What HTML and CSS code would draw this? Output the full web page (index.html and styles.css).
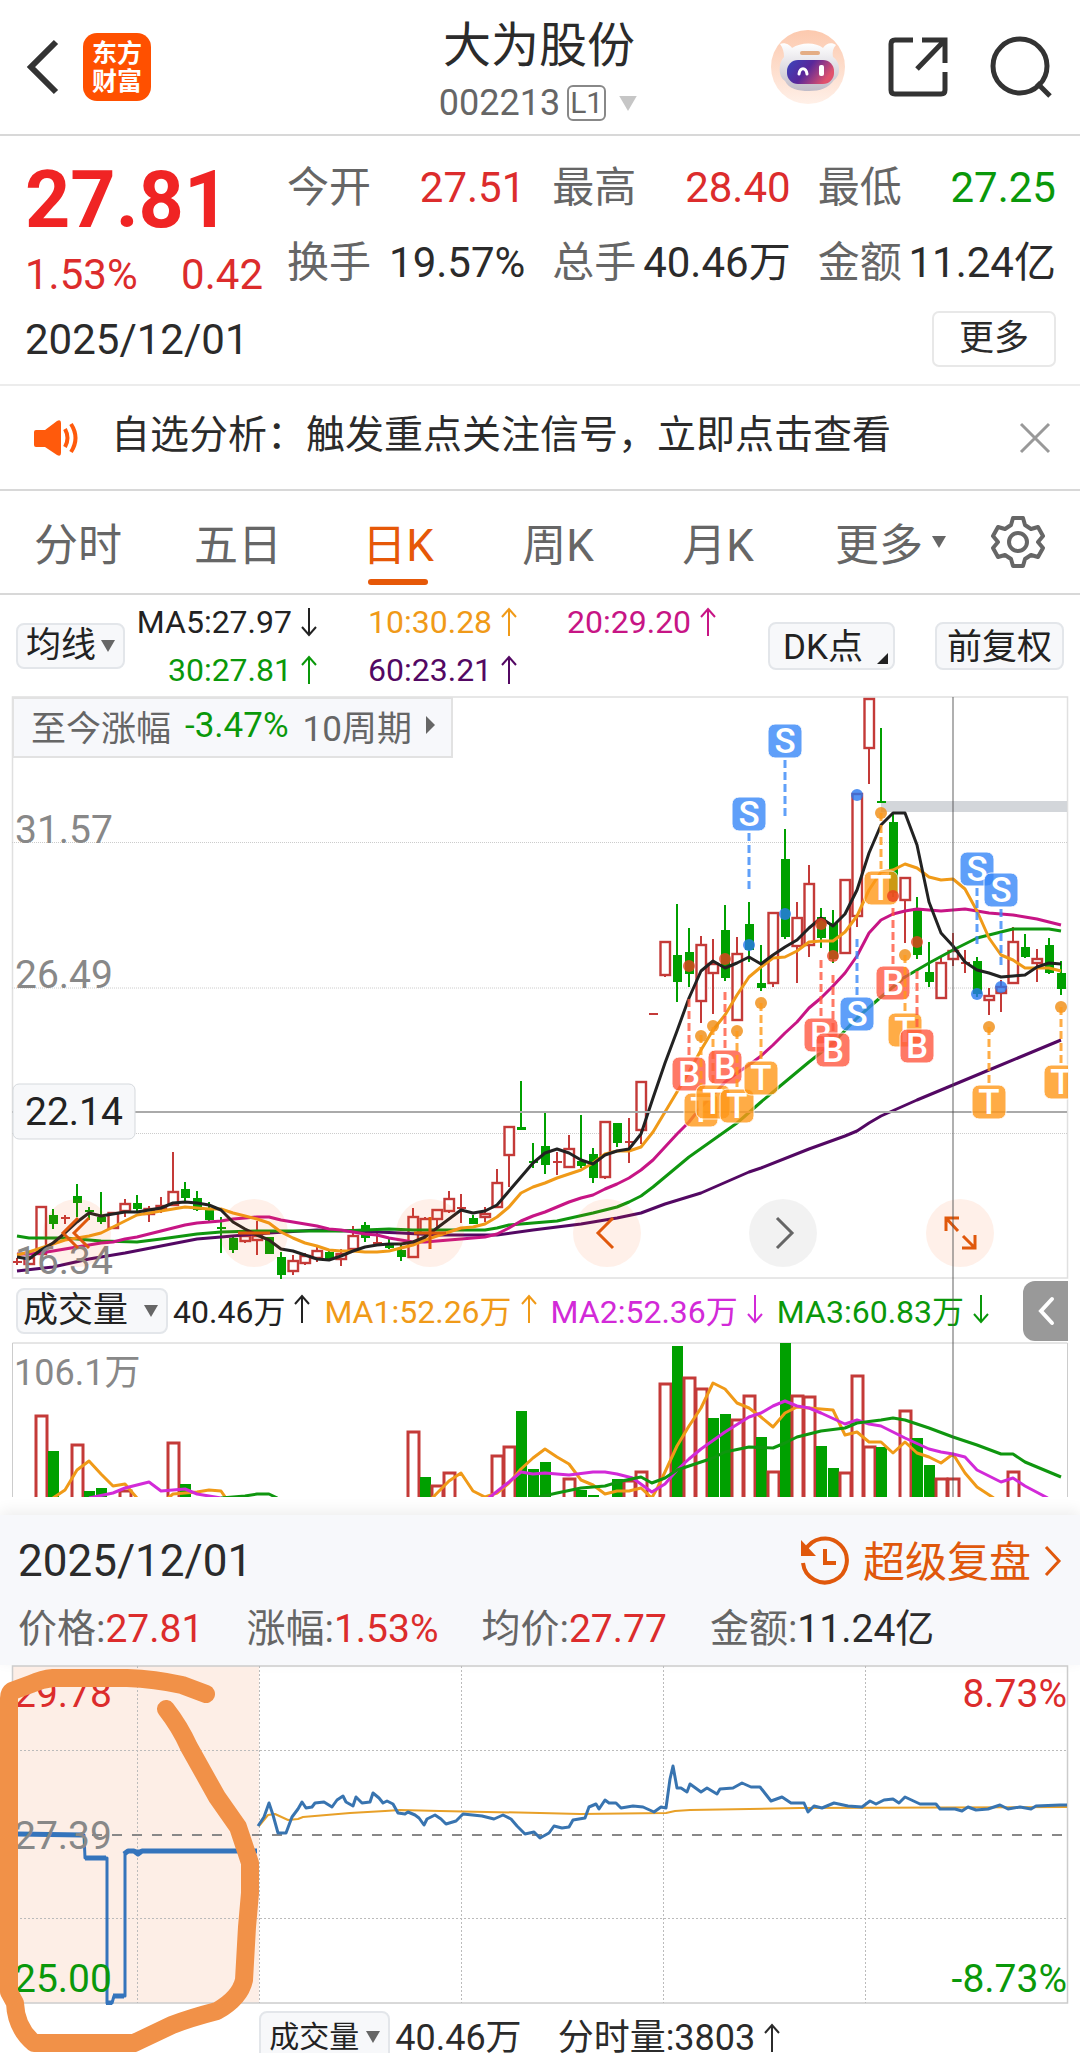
FILE: index.html
```html
<!DOCTYPE html>
<html lang="zh-CN">
<head>
<meta charset="utf-8">
<meta name="viewport" content="width=device-width, initial-scale=1">
<title>大为股份 002213</title>
<link rel="stylesheet" href="styles.css">
</head>
<body>
<svg class="defs" width="0" height="0" aria-hidden="true">
  <symbol id="up" viewBox="0 0 16 30"><path d="M8 29V2M1 10L8 2l7 8" fill="none" stroke="currentColor" stroke-width="2"/></symbol>
  <symbol id="down" viewBox="0 0 16 30"><path d="M8 1v27M1 20l7 8 7-8" fill="none" stroke="currentColor" stroke-width="2"/></symbol>
  <symbol id="caret" viewBox="0 0 14 12"><path d="M0 0h14L7 12z" fill="currentColor"/></symbol>
</svg>

<header class="topbar">
  <div class="side">
    <button class="icon" aria-label="返回"><svg width="34" height="56" viewBox="0 0 34 56"><path d="M30 3L5 28l25 25" fill="none" stroke="#333" stroke-width="6"/></svg></button>
    <a class="logo" href="#">东方<br>财富</a>
  </div>
  <div class="heading">
    <h1>大为股份</h1>
    <p class="code">002213<span class="level">L1</span><svg class="switch" width="22" height="15"><use href="#caret"/></svg></p>
  </div>
  <div class="side end">
    <button class="icon" aria-label="智能助手">
      <svg width="76" height="76" viewBox="0 0 76 76">
        <defs>
          <linearGradient id="halo" x2="0" y2="1"><stop stop-color="#fcc9ae"/><stop offset="1" stop-color="#fff0e8"/></linearGradient>
          <linearGradient id="visor" x2="1" y2=".4"><stop stop-color="#3947bd"/><stop offset=".5" stop-color="#58279a"/><stop offset="1" stop-color="#e0526d"/></linearGradient>
          <linearGradient id="shell" x2="0" y2="1"><stop stop-color="#fff"/><stop offset="1" stop-color="#c0bcc8"/></linearGradient>
        </defs>
        <circle cx="38" cy="38" r="37" fill="url(#halo)"/>
        <path d="M10 15c5-2 10 1 12 4 9-6 24-6 31 0 3-5 9-6 13-3-3 3-4 7-3 12 8 5 8 19 1 23-5 8-14 11-25 11S19 60 15 52c-7-4-7-18-1-24 0-5-1-9-4-13z" fill="url(#shell)"/>
        <rect x="17" y="31" width="47" height="24" rx="11" fill="url(#visor)"/>
        <path d="M29 45c1-7 7-7 8 0" fill="none" stroke="#fff" stroke-width="3" stroke-linecap="round"/>
        <rect x="49" y="36" width="5" height="11" rx="2" fill="#fff"/>
        <rect x="30" y="22" width="20" height="4" rx="2" fill="#e4ad84"/>
      </svg>
    </button>
    <button class="icon" aria-label="分享"><svg width="60" height="60" viewBox="0 0 60 60"><path d="M25 3H7q-4 0-4 4v46q0 4 4 4h46q4 0 4-4V35M34 3h23v23M57 3L29 32" fill="none" stroke="#333" stroke-width="5"/></svg></button>
    <button class="icon" aria-label="搜索"><svg width="62" height="62" viewBox="0 0 62 62"><circle cx="30" cy="30" r="27" fill="none" stroke="#333" stroke-width="5"/><path d="M47 47l13 13" stroke="#333" stroke-width="5"/></svg></button>
  </div>
</header>

<section class="quote">
  <div class="last">
    <strong class="price">27.81</strong>
    <p class="change"><span>1.53%</span><span>0.42</span></p>
  </div>
  <dl class="fields">
    <div><dt>今开</dt><dd class="red">27.51</dd></div>
    <div><dt>最高</dt><dd class="red">28.40</dd></div>
    <div><dt>最低</dt><dd class="green">27.25</dd></div>
    <div><dt>换手</dt><dd>19.57%</dd></div>
    <div><dt>总手</dt><dd>40.46万</dd></div>
    <div><dt>金额</dt><dd>11.24亿</dd></div>
  </dl>
  <div class="dateline">
    <time>2025/12/01</time>
    <button class="more">更多</button>
  </div>
</section>

<section class="notice">
  <svg width="46" height="38" viewBox="0 0 46 38"><path d="M3 11h9L24 2q4-2 4 2v30q0 4-4 2L12 28H3q-2 0-2-2V13q0-2 2-2z" fill="#ff5a0c"/><path d="M32 10q5 9 0 18M38 5q9 14 0 28" fill="none" stroke="#ff5a0c" stroke-width="4"/></svg>
  <a href="#">自选分析：触发重点关注信号，立即点击查看</a>
  <button class="icon" aria-label="关闭"><svg width="32" height="32" viewBox="0 0 32 32"><path d="M2 2l28 28M30 2L2 30" stroke="#999" stroke-width="3"/></svg></button>
</section>

<nav class="tabs">
  <button>分时</button>
  <button>五日</button>
  <button class="active">日K</button>
  <button>周K</button>
  <button>月K</button>
  <button class="last-tab">更多<svg width="14" height="12"><use href="#caret"/></svg></button>
  <button class="gear" aria-label="设置"><svg width="54" height="54" viewBox="0 0 54 54"><path d="M22 3h10l2 7 6 4 7-2 5 9-5 6 5 6-5 9-7-2-6 4-2 7H22l-2-7-6-4-7 2-5-9 5-6-5-6 5-9 7 2 6-4z" fill="none" stroke="#666" stroke-width="4" stroke-linejoin="round"/><circle cx="27" cy="27" r="9" fill="none" stroke="#666" stroke-width="4"/></svg></button>
</nav>

<section class="averages">
  <span class="picker">
    <select aria-label="主图指标"><option>均线</option></select>
    <svg width="14" height="12"><use href="#caret"/></svg>
  </span>
  <div class="ma">
    <span class="right">MA5:27.97<svg><use href="#down"/></svg></span>
    <span class="amber">10:30.28<svg><use href="#up"/></svg></span>
    <span class="magenta">20:29.20<svg><use href="#up"/></svg></span>
    <span class="right green">30:27.81<svg><use href="#up"/></svg></span>
    <span class="violet">60:23.21<svg><use href="#up"/></svg></span>
  </div>
  <button class="chip dk">DK点<svg width="11" height="11"><path d="M11 0v11H0z" fill="#222"/></svg></button>
  <button class="chip">前复权</button>
</section>

<section class="charts">
  <div class="kline">
    <svg id="kline" viewBox="0 696 1080 583" role="img" aria-label="日K线图"></svg>
    <button class="since">至今涨幅 <b>-3.47%</b> 10周期<svg width="9" height="18"><path d="M0 0l9 9-9 9z" fill="#666"/></svg></button>
    <div class="controls">
      <button aria-label="快退"><svg viewBox="0 0 68 68"><path d="M35 19L20 34l15 15M46 19L31 34l15 15"/></svg></button>
      <button aria-label="缩小"><svg viewBox="0 0 68 68"><path d="M18 34h32"/></svg></button>
      <button aria-label="放大"><svg viewBox="0 0 68 68"><path d="M18 34h32M34 18v32"/></svg></button>
      <button aria-label="后退"><svg viewBox="0 0 68 68"><path d="M40 19L25 34l15 15"/></svg></button>
      <button class="off" aria-label="前进"><svg viewBox="0 0 68 68"><path d="M28 19l15 15-15 15"/></svg></button>
      <button aria-label="全屏"><svg viewBox="0 0 68 68"><path d="M33 19H20v13M20 19l12 13M36 49h13V36M49 49L37 37"/></svg></button>
    </div>
  </div>
  <div class="volbar">
    <span class="picker wide">
      <select aria-label="副图指标"><option>成交量</option></select>
      <svg width="14" height="12"><use href="#caret"/></svg>
    </span>
    <span>40.46万<svg><use href="#up"/></svg></span>
    <span class="amber">MA1:52.26万<svg><use href="#up"/></svg></span>
    <span class="pink">MA2:52.36万<svg><use href="#down"/></svg></span>
    <span class="green">MA3:60.83万<svg><use href="#down"/></svg></span>
    <button class="drawer" aria-label="展开"><svg width="18" height="30" viewBox="0 0 18 30"><path d="M15 3L4 15l11 12" fill="none" stroke="#fff" stroke-width="4" stroke-linecap="round"/></svg></button>
  </div>
  <svg id="volume" viewBox="0 1342 1080 155" role="img" aria-label="成交量图"></svg>
  <i class="crosshair"></i>
</section>

<section class="panel">
  <div class="panel-head">
    <time>2025/12/01</time>
    <a href="#" class="replay">
      <svg width="50" height="50" viewBox="0 0 50 50"><path d="M5 15A22 22 0 1 1 3 27" fill="none" stroke="currentColor" stroke-width="4"/><path d="M1 4v16h15z" fill="currentColor"/><path d="M25 13v14h11" fill="none" stroke="currentColor" stroke-width="4"/></svg>
      <span>超级复盘</span>
      <svg width="18" height="30" viewBox="0 0 18 30"><path d="M2 1l13 14L2 29" fill="none" stroke="currentColor" stroke-width="3"/></svg>
    </a>
  </div>
  <p class="stats">
    <span>价格:<b class="red">27.81</b></span>
    <span>涨幅:<b class="red">1.53%</b></span>
    <span>均价:<b class="red">27.77</b></span>
    <span>金额:<b>11.24亿</b></span>
  </p>
</section>

<section class="intraday">
  <svg id="intraday" viewBox="0 1665 1080 340" role="img" aria-label="分时图"></svg>
  <div class="footbar">
    <span class="picker small">
      <select aria-label="分时副图指标"><option>成交量</option></select>
      <svg width="14" height="12"><use href="#caret"/></svg>
    </span>
    <span>40.46万</span>
    <span class="tick">分时量:3803<svg><use href="#up"/></svg></span>
  </div>
  <svg class="markup" viewBox="0 1665 1080 388" aria-hidden="true">
    <path d="M206 1694L182 1685Q155 1679 127 1678H53Q42 1679 31 1684L12 1691Q9 1693 9 1698V1992L15 2003Q16 2028 34 2043H134L172 2025Q190 2018 217 2011 240 1998 244 1980L247 1927 250 1893V1863L238 1827 217 1797 189 1747Q180 1727 166 1709" fill="none" stroke="#f19148" stroke-width="18" stroke-linecap="round" stroke-linejoin="round"/>
  </svg>
</section>
<script src="charts.js"></script>
</body>
</html>
```

FILE: styles.css
```css
* { box-sizing: border-box; }
body {
  margin: 0;
  background: #fff;
  color: #2b2b2b;
  font-family: Roboto, "Noto Sans CJK SC", sans-serif;
  overflow-x: hidden;
}
h1, p, dl, dd { margin: 0; font-weight: 400; }
button, select { font: inherit; color: inherit; border: 0; background: none; padding: 0; margin: 0; }
a { color: inherit; text-decoration: none; }
b { font-weight: 400; }
svg { display: block; flex: none; }
.defs { position: absolute; }
.red { color: #dc2c2c; }
.green { color: #0a980a; }
.amber { color: #f09a18; }
.magenta { color: #c71585; }
.violet { color: #530863; }
.pink { color: #d22ad8; }

.topbar {
  display: grid;
  grid-template-columns: 1fr auto 1fr;
  height: 136px;
  padding: 0 28px 0 26px;
  border-bottom: 2px solid #d8d8d8;
}
.side { display: flex; align-items: center; gap: 23px; }
.end { justify-content: flex-end; gap: 42px; }
.logo {
  width: 68px;
  height: 68px;
  padding-top: 7px;
  border-radius: 14px;
  background: #ff5000;
  color: #fff;
  font-size: 25px;
  font-weight: 700;
  line-height: 28px;
  text-align: center;
}
.heading { display: flex; flex-direction: column; align-items: center; padding-top: 12px; }
.heading h1 { font-size: 48px; line-height: 68px; }
.code { display: flex; align-items: center; gap: 7px; color: #666; font-size: 36px; line-height: 46px; }
.level { width: 39px; border: 2px solid #888; border-radius: 6px; font-size: 30px; line-height: 32px; text-align: center; }
.switch { color: #c6c6c6; margin-left: 4px; }

.quote {
  display: grid;
  grid-template-columns: 238px 1fr;
  grid-template-rows: 148px 74px;
  column-gap: 24px;
  height: 250px;
  padding: 18px 24px 0 25px;
  border-bottom: 2px solid #ececec;
}
.price { display: block; color: #f02424; font-size: 79px; font-weight: 700; line-height: 92px; }
.change { display: flex; justify-content: space-between; color: #dc2c2c; font-size: 42px; line-height: 58px; }
.fields { display: grid; grid-template-columns: 1fr 1fr 1fr; column-gap: 27px; grid-auto-rows: 75px; font-size: 42px; line-height: 67px; }
.fields div { display: flex; justify-content: space-between; white-space: nowrap; }
.fields dt { color: #666; }
.dateline { grid-column: 1 / 3; display: flex; align-items: center; justify-content: space-between; font-size: 42px; }
.more { width: 124px; height: 56px; border: 2px solid #e8e8e8; border-radius: 7px; font-size: 35px; line-height: 50px; }

.notice { display: flex; align-items: center; gap: 32px; height: 105px; padding: 0 29px 0 33px; border-bottom: 2px solid #d8d8d8; font-size: 39px; }
.notice a { line-height: 52px; padding-bottom: 5px; }
.notice button { margin-left: auto; }

.tabs { display: grid; grid-template-columns: repeat(6, 4fr) 3fr; height: 104px; border-bottom: 2px solid #d8d8d8; color: #666; font-size: 44px; }
.tabs button { display: flex; align-items: center; justify-content: center; gap: 9px; position: relative; padding-right: 4px; white-space: nowrap; }
.tabs .active { color: #e65808; }
.tabs .active::after { content: ""; position: absolute; bottom: 8px; width: 60px; height: 6px; border-radius: 3px; background: #e65808; }
.tabs .last-tab { justify-content: flex-end; padding-right: 14px; }
.tabs .gear { justify-content: flex-start; padding-left: 31px; }

.picker, .chip { display: flex; align-items: center; height: 46px; border: 2px solid #e3e6ea; border-radius: 8px; background: #f7f8fa; font-size: 35px; }
.picker { position: relative; width: 109px; color: #222; }
.picker select { appearance: none; width: 100%; padding-left: 8px; line-height: 42px; }
.picker svg { position: absolute; right: 8px; color: #666; pointer-events: none; }
.chip { height: 48px; padding: 0 10px 4px; white-space: nowrap; }
.averages { display: flex; align-items: center; height: 101px; padding: 0 16px; color: #222; }
.ma { display: grid; grid-template-columns: 192px 148px 1fr; column-gap: 51px; flex: 1; font-size: 32px; line-height: 48px; }
.ma span, .volbar > span, .tick { display: flex; align-items: center; gap: 9px; white-space: nowrap; }
.ma svg { width: 16px; height: 30px; }
.right { justify-content: flex-end; }
.dk { margin-right: 40px; gap: 14px; padding: 0 5px 4px 13px; }
.dk svg { align-self: flex-end; }

.charts { position: relative; }
.kline { position: relative; }
#kline, #volume, #intraday { width: 100%; height: auto; }
.since { position: absolute; left: 12px; top: 1px; display: flex; align-items: center; gap: 14px; height: 61px; padding: 0 16px 5px 17px; border: 2px solid #e2e2e2; background: #f7f8fb; color: #666; font-size: 35px; }
.since b { color: #0a980a; }
.controls { position: absolute; left: 4%; right: 8%; bottom: 2%; display: flex; justify-content: space-between; }
.controls button { width: 68px; height: 68px; border-radius: 50%; background: rgba(250, 90, 10, .09); }
.controls .off { background: rgba(0, 0, 0, .05); }
.controls path { fill: none; stroke: #e0580c; stroke-width: 3; }
.controls .off path { stroke: #666; }
.volbar { display: flex; align-items: center; height: 63px; padding: 0 12px 0 16px; color: #222; font-size: 32px; }
.volbar > span { margin-right: 14px; padding-bottom: 3px; }
.volbar > span:not(.picker) > svg, .tick svg { width: 16px; height: 34px; }
.volbar > .picker { margin-right: 5px; padding-bottom: 0; }
.wide { width: 152px; }
.wide select { padding-left: 5px; }
.drawer { display: flex; align-items: center; justify-content: center; width: 45px; height: 60px; margin-left: auto; border-radius: 12px 0 0 12px; background: #999; }
.crosshair { position: absolute; left: 88.15%; top: 1px; bottom: 0; width: 2px; background: rgba(80, 80, 80, .45); pointer-events: none; }

.panel { margin-top: 18px; height: 150px; padding: 16px 18px 0; background: #f7f8fb; box-shadow: 0 -4px 14px rgba(0, 0, 0, .07); }
.panel-head { display: flex; align-items: center; justify-content: space-between; height: 60px; font-size: 44px; }
.replay { display: flex; align-items: center; gap: 13px; color: #e0580c; font-size: 42px; }
.replay span { padding-bottom: 6px; }
.stats { display: flex; gap: 43px; color: #666; font-size: 39px; line-height: 76px; white-space: nowrap; }
.stats b:not(.red) { color: #2b2b2b; }

.intraday { position: relative; overflow: hidden; }
.footbar { display: flex; align-items: flex-start; height: 48px; padding: 6px 0 0 24%; font-size: 36px; line-height: 54px; overflow: hidden; }
.footbar .small { width: 131px; height: 52px; margin-right: 5px; font-size: 30px; }
.tick { margin-left: 36px; }
.markup { position: absolute; left: 0; top: 0; width: 100%; }

.axis { font-size: 39px; fill: #888; }
.axis.sm { font-size: 36px; }
.axis.cursor { fill: #222; }
.axis.hi { fill: #dc2c2c; }
.axis.lo { fill: #0a980a; }
.badge { font-size: 35px; font-weight: 500; fill: #fff; text-anchor: middle; }
```

FILE: charts.js
```js
const RED = '#c43a38', GREEN = '#00a000';
const X = i => 17 + 12 * i;
const $ = id => document.getElementById(id);

const line = (pts, color, w = 3) =>
  `<polyline points="${pts.map(p => p.join()).join(' ')}" fill="none" stroke="${color}" stroke-width="${w}" stroke-linejoin="round"/>`;
const seg = (x1, y1, x2, y2, color, extra = '') =>
  `<path d="M${x1} ${y1}L${x2} ${y2}" stroke="${color}" fill="none" ${extra}/>`;
const frame = (y, h, color) =>
  `<rect x="12.5" y="${y}" width="1055" height="${h}" fill="none" stroke="${color}" stroke-width="1.5"/>`;
const text = (x, y, s, cls) => `<text x="${x}" y="${y}" class="axis ${cls || ''}">${s}</text>`;
const byIndex = ys => ys.map((y, i) => [X(i), y]);
const sparse = s => s.split(' ').map(p => { const [i, y] = p.split(':'); return [X(+i), +y]; });

// index, colour, body top, body bottom, high, low
const candles = `0 r 1261 1263 1258 1265|1 r 1257 1264 1256 1265|2 r 1206 1254 1206 1254|3 g 1215 1224 1209 1229|4 r 1217 1218 1215 1224
5 g 1196 1203 1184 1217|6 g 1210 1212 1207 1220|7 g 1217 1222 1192 1224|8 r 1212 1228 1212 1228|9 r 1203 1211 1199 1217
10 g 1203 1209 1195 1213|11 r 1208 1214 1206 1222|12 r 1205 1209 1197 1213|13 r 1191 1205 1152 1205|14 g 1189 1198 1182 1203
15 g 1198 1210 1191 1211|16 g 1210 1220 1202 1222|17 g 1227 1228 1217 1253|18 g 1238 1250 1237 1253|19 r 1235 1241 1233 1243
20 r 1235 1240 1221 1255|21 g 1237 1254 1237 1254|22 g 1257 1275 1252 1279|23 r 1260 1271 1255 1275|24 r 1255 1263 1253 1265
25 r 1250 1258 1247 1262|26 g 1252 1259 1250 1261|27 r 1253 1259 1249 1266|28 r 1235 1249 1226 1251|29 g 1225 1238 1222 1242
30 r 1242 1243 1233 1244|31 g 1244 1248 1238 1249|32 g 1250 1257 1244 1261|33 r 1216 1257 1208 1257|34 r 1218 1233 1217 1240
35 r 1209 1219 1209 1227|36 r 1198 1211 1191 1213|37 r 1207 1209 1194 1223|38 g 1218 1224 1215 1224|39 r 1213 1217 1207 1222
40 r 1182 1207 1169 1207|41 r 1126 1155 1126 1187|42 g 1127 1130 1081 1130|43 g 1161 1162 1143 1168|44 g 1146 1165 1112 1174
45 r 1161 1163 1152 1175|46 r 1148 1167 1135 1168|47 g 1161 1166 1115 1168|48 g 1154 1178 1148 1183|49 r 1121 1177 1121 1179
50 g 1123 1143 1123 1147|51 r 1141 1143 1118 1163|52 r 1081 1130 1081 1144|53 r 1013 1015 1013 1015|54 r 941 975 941 977
55 g 955 982 904 1002|56 g 952 974 928 987|57 r 944 1001 936 1023|58 r 963 973 939 1014|59 g 930 978 905 981
60 r 953 1020 937 1020|61 g 924 950 902 962|62 g 983 988 945 991|63 r 912 983 912 987|64 g 859 937 829 939
65 r 917 946 902 983|66 r 883 945 865 957|67 g 917 938 908 948|68 g 923 959 910 963|69 r 879 953 879 953
70 r 793 916 793 927|71 r 698 748 698 784|72 g 801 803 728 803|73 g 822 893 813 897|74 r 877 900 877 943
75 g 908 955 897 959|76 g 972 982 942 987|77 r 962 998 957 998|78 r 950 959 933 966|79 r 962 964 950 973
80 g 961 994 957 997|81 r 995 1000 988 1015|82 r 986 993 980 1012|83 r 941 983 927 983|84 g 947 957 934 958
85 r 958 963 949 982|86 g 945 973 938 974|87 g 973 989 961 995`.split(/[|\n]/).map(s => s.split(' '));

const ma5 = [1257,1259,1250,1243,1233,1222,1213,1216,1214,1212,1212,1210,1208,1203,1202,1203,1205,1210,1222,1229,1235,1240,1249,1251,1255,1259,1260,1256,1251,1247,1245,1244,1244,1242,1237,1228,1219,1210,1213,1211,1205,1191,1177,1163,1153,1149,1153,1160,1164,1155,1151,1149,1134,1098,1063,1031,998,971,961,968,963,957,964,955,947,940,928,918,926,914,890,853,825,813,813,845,902,933,946,962,970,973,977,976,975,967,963,964];
const ma10 = [1255,1252,1248,1244,1240,1238,1236,1233,1227,1221,1215,1213,1211,1209,1207,1208,1209,1209,1213,1216,1219,1223,1232,1238,1243,1246,1250,1251,1251,1252,1252,1251,1248,1245,1240,1236,1232,1228,1227,1224,1217,1207,1193,1187,1183,1178,1174,1170,1163,1154,1151,1151,1147,1132,1112,1092,1072,1050,1030,1015,995,977,967,958,957,951,942,941,941,932,916,890,872,870,864,868,877,880,879,889,911,938,955,960,968,968,968,971];
const ma20 = [1254,1254,1253,1251,1249,1247,1245,1243,1242,1239,1237,1234,1231,1228,1225,1223,1222,1221,1219,1218,1217,1217,1220,1222,1224,1226,1229,1230,1232,1234,1235,1238,1240,1242,1242,1241,1240,1239,1238,1237,1234,1228,1221,1216,1212,1207,1202,1198,1195,1189,1184,1178,1170,1160,1147,1134,1122,1107,1095,1082,1073,1065,1056,1045,1033,1022,1008,998,986,973,956,933,920,914,911,909,910,911,910,909,911,913,914,915,917,919,922,925];
const ma30 = '0:1236 1:1238 4:1238 7:1241 10:1242 12:1239 15:1234 17:1232 20:1231 27:1231 31:1229 33:1230 39:1230 40:1228 41:1225 43:1223 45:1221 48:1213 50:1207 51:1202 52:1196 53:1187 54:1177 56:1157 58:1140 60:1123 62:1102 64:1082 66:1062 68:1043 70:1018 72:997 74:977 76:963 78:950 80:938 82:932 83:929 86:929 87:931';
const ma60 = '0:1271 3:1267 6:1259 9:1253 12:1246 15:1239 17:1237 21:1233 25:1230 28:1231 32:1233 35:1235 40:1235 43:1230 47:1224 50:1218 52:1213 54:1204 57:1193 61:1172 62:1168 66:1149 69:1136 70:1131 71:1123 72:1116 75:1100 78:1085 81:1070 84:1055 87:1040';

// letter, index, badge centre y, signal dot y
const marks = [
  ['B',56,1074,966],['T',57,1110,1036],['T',58,1102,1026],['B',59,1067,959],['T',60,1106,1031],
  ['S',61,814,945],['T',62,1078,1003],['S',64,741,914],['B',67,1035,924],['B',68,1050,956],
  ['S',70,1014,795],['T',72,888,813],['B',73,983,896],['T',74,1030,955],['B',75,1046,942],
  ['S',80,869,994],['T',81,1102,1027],['S',82,890,987],['T',87,1082,1007]];
const tint = { S: '#3888f8', B: '#ff5840', T: '#ff9818' };
const dot = { S: '#2878f0', B: '#e84020', T: '#f08c10' };

function drawKline() {
  let s = frame(697, 581, '#e0e0e0');
  for (const y of [842.5, 988, 1133.5]) s += seg(12, y, 1067, y, '#ccc', 'stroke-dasharray="1 1"');
  s += '<rect x="881" y="801" width="186" height="11" fill="#d3d6da"/>';
  for (const [i, c, t, b, h, l] of candles) {
    const x = X(+i), col = c === 'r' ? RED : GREEN, H = b - t;
    s += seg(x, h, x, t, col, 'stroke-width="2"') + seg(x, b, x, l, col, 'stroke-width="2"');
    s += c === 'r' && H > 2
      ? `<rect x="${x - 4.5}" y="${+t + 1}" width="9.5" height="${H - 1}" fill="#fff" stroke="${RED}" stroke-width="2.4"/>`
      : `<rect x="${x - 4}" y="${t}" width="9" height="${Math.max(H, 2)}" fill="${col}"/>`;
  }
  s += line(sparse(ma60), '#530863') + line(sparse(ma30), '#0f960f') + line(byIndex(ma20), '#c71585')
    + line(byIndex(ma10), '#f09a18') + line(byIndex(ma5), '#222');
  s += seg(12, 1112, 1067, 1112, '#aaa', 'stroke-width="2"');
  s += '<clipPath id="plot"><rect x="12" y="697" width="1056" height="581"/></clipPath><g clip-path="url(#plot)">';
  for (const [k, i, y, d] of marks) {
    const x = X(i), above = y < d;
    const from = above ? y + 19 : y - 75;
    s += `<circle cx="${x}" cy="${d}" r="6" fill="${dot[k]}" opacity=".8"/>`;
    s += seg(x, from, x, from + 56, tint[k], 'stroke-width="3" stroke-dasharray="8 4" opacity=".8"');
    s += `<rect x="${x - 17}" y="${y - 17}" width="34" height="34" rx="7" fill="${tint[k]}" stroke="#fff" opacity=".8"/>`;
    s += `<text class="badge" x="${x}" y="${y + 12}">${k}</text>`;
  }
  s += '</g>' + text(15, 843, '31.57') + text(15, 988, '26.49') + text(15, 1274, '16.34');
  s += '<rect x="13" y="1084" width="122" height="55" rx="6" fill="#f7f8fa" stroke="#d5d9dd"/>' + text(25, 1125, '22.14', 'cursor');
  $('kline').innerHTML = s;
}

const bars = '2r1415 3g1451 5r1444 6g1491 7g1488 9r1490 13r1442 14g1484 33r1431 34g1477 35r1485 36r1472 40r1455 41r1446 42g1411 43g1469 44g1462 46r1478 47g1490 48g1495 50g1479 51r1480 52r1471 54r1383 55g1346 56r1377 57r1388 58g1418 59g1414 60r1419 61r1395 62g1437 63r1471 64g1343 65r1395 66r1396 67g1446 68g1468 69r1472 70r1375 71r1446 72g1447 74r1410 75g1438 76g1465 77r1478 78r1478 83r1471';
const vol = [
  ['#f09a18', '3:1498 4:1490 5:1470 6:1461 7:1474 8:1486 9:1484 10:1498'],
  ['#f09a18', '12.6:1498 13:1494 15:1492 16:1490 17:1491 17.4:1498'],
  ['#f09a18', '34.6:1498 36:1481 37:1473 38:1491 39:1497 40:1493 41:1483 42:1469 43:1458 44:1449 45:1457 46:1464 47:1480 48:1485 49:1494 50:1491 51:1491 52:1488 52.9:1498 53.4:1487 54:1472 55:1446 56:1426 57:1408 58:1383 59:1389 60:1403 61:1408 62:1417 63:1427 64:1413 65:1407 66:1408 68:1410 69:1435 70:1432 71:1442 72:1442 73:1453 74:1442 75:1453 76:1457 77:1463 78:1454 79:1473 80:1487 81.4:1498'],
  ['#d22ad8', '6:1498 8:1493 9:1488 11:1482 12:1491 14:1489 15:1494 17:1498'],
  ['#d22ad8', '39.3:1498 41:1482 42:1472 43:1474 44:1473 46:1475 48:1472 49:1472 50:1474 51.3:1478 52.9:1492 54:1484 55:1470 56:1459 57:1449 59:1432 61:1417 62:1413 63:1406 64:1401 65:1406 66:1408 67:1413 69:1424 70:1420 71:1424 72:1426 74:1438 76:1449 77:1452 78:1454 79:1457 80:1470 82:1482 83:1478 84:1486 85.9:1498'],
  ['#0f960f', '17:1498 19:1496 20:1494 21:1494 21.7:1498'],
  ['#0f960f', '43.5:1497 45:1493 47:1488 49:1486 50.4:1481 52:1477 52.9:1483 54:1478 55:1470 58:1458 59:1452 61:1447 63:1448 64:1443 65:1437 67:1431 69:1428 70:1423 72:1420 73:1418 74:1420 76:1428 78:1437 80:1445 82:1454 83:1454 84:1462 87:1477']];

function drawVolume() {
  let s = '<path d="M12.5 1497V1343H1067.5V1497" fill="none" stroke="#ccc"/>';
  for (const b of bars.split(' ')) {
    const [, i, c, y] = b.match(/(\d+)([rg])(\d+)/), x = X(+i);
    s += c === 'g'
      ? `<rect x="${x - 5}" y="${y}" width="11" height="${1497 - y}" fill="${GREEN}"/>`
      : `<rect x="${x - 5}" y="${+y + 1}" width="11" height="160" fill="none" stroke="${RED}" stroke-width="3"/>`;
  }
  for (const [c, p] of vol) s += line(sparse(p), c);
  $('volume').innerHTML = s + text(14, 1385, '106.1万', 'sm');
}

const pairs = s => s.split(' ').map(p => p.split(','));
const price = '258,1826 264,1817 269,1803 273,1815 278,1833 286,1833 292,1817 298,1809 302,1802 306,1808 312,1807 315,1803 324,1802 332,1807 337,1800 343,1796 346,1802 353,1806 356,1797 362,1803 370,1802 373,1793 379,1798 383,1803 387,1801 393,1804 398,1813 405,1814 408,1812 415,1815 419,1818 424,1825 427,1819 435,1815 441,1819 446,1824 456,1821 463,1814 482,1816 494,1819 503,1815 511,1819 517,1826 525,1834 534,1832 540,1838 549,1833 554,1826 562,1828 569,1827 573,1820 585,1818 589,1807 596,1804 599,1809 605,1800 609,1803 616,1803 621,1808 633,1806 643,1807 654,1812 661,1807 666,1808 670,1779 673,1766 677,1788 681,1788 687,1792 690,1784 701,1792 707,1788 717,1794 720,1789 733,1788 742,1783 751,1787 760,1787 771,1801 782,1797 791,1803 804,1803 808,1812 814,1806 822,1808 834,1803 848,1806 862,1807 870,1801 876,1804 884,1800 893,1799 899,1803 905,1797 920,1804 936,1804 940,1809 955,1809 962,1811 968,1807 976,1810 988,1809 1000,1805 1008,1809 1020,1807 1031,1809 1036,1806 1060,1805 1067,1805';
const average = '259,1826 268,1815 275,1814 288,1820 298,1819 303,1817 350,1813 385,1811 400,1810 440,1811 540,1813 580,1814 666,1813 675,1811 690,1810 800,1808 1067,1807';

function drawIntraday() {
  let s = '<rect x="12" y="1666" width="247" height="337" fill="#fdeee6"/>' + frame(1666, 337, '#ccc');
  for (const x of [137.5, 259.5, 461.5, 663.5, 865.5]) s += seg(x, 1666, x, 2003, '#bbb', 'stroke-dasharray="2 2"');
  for (const y of [1750.5, 1918.5]) s += seg(12, y, 1067, y, '#bbb', 'stroke-dasharray="2 2"');
  s += seg(12, 1835, 1067, 1835, '#888', 'stroke-width="2" stroke-dasharray="10 10"');
  s += line(pairs('18,1834 84,1835 85,1858 107,1858 107,2003 112,2003 114,1996 125,1996 125,1854 129,1851 256,1851'), '#3474bc');
  for (const p of ['18,1834 82,1835', '85,1858 106,1858', '106,2003 112,2003', '113,1996 124,1996', '124,1854 128,1851 134,1851 138,1854 142,1851 257,1851'])
    s += line(pairs(p), '#3474bc', 5);
  s += line(pairs(average), '#e8a028', 2) + line(pairs(price), '#3874b0');
  s += text(14, 1707, '29.78', 'hi') + text(14, 1849, '27.39') + text(14, 1992, '25.00', 'lo');
  s += '<g text-anchor="end">' + text(1067, 1707, '8.73%', 'hi') + text(1067, 1992, '-8.73%', 'lo') + '</g>';
  $('intraday').innerHTML = s;
}

drawKline();
drawVolume();
drawIntraday();
```
